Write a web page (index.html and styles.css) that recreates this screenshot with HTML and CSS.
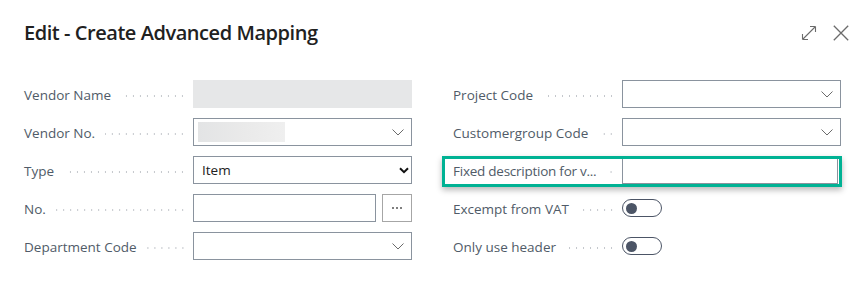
FILE: index.html
```html
<!DOCTYPE html>
<html lang="en">
<head>
<meta charset="utf-8">
<title>Edit - Create Advanced Mapping</title>
<link rel="stylesheet" href="styles.css">
</head>
<body>
<div class="dialog">
  <header class="header">
    <h1 class="title">Edit - Create Advanced Mapping</h1>
    <div class="actions">
      <button class="icon-btn" aria-label="Expand">
        <svg width="16" height="16" viewBox="0 0 16 16"><path d="M1.5 14.5 L14.5 1.5 M1.5 14.5 V9 M1.5 14.5 H7 M14.5 1.5 H9 M14.5 1.5 V7" fill="none" stroke="#6b6b6b" stroke-width="1.1"/></svg>
      </button>
      <button class="icon-btn" aria-label="Close">
        <svg width="16" height="16" viewBox="0 0 16 16"><path d="M0.8 0.8 L15.2 15.2 M15.2 0.8 L0.8 15.2" fill="none" stroke="#6b6b6b" stroke-width="1.3"/></svg>
      </button>
    </div>
  </header>

  <div class="form">
    <div class="col">
      <div class="row">
        <span class="label"><span class="label-text">Vendor Name</span><span class="leader"></span></span>
        <div class="field field-readonly"></div>
      </div>
      <div class="row">
        <span class="label"><span class="label-text">Vendor No.</span><span class="leader"></span></span>
        <div class="field field-lookup">
          <span class="blur-block"></span>
          <svg class="chevron" width="12" height="7" viewBox="0 0 12 7"><path d="M0.5 0.5 L6 6 L11.5 0.5" fill="none" stroke="#6b6b6b" stroke-width="1"/></svg>
        </div>
      </div>
      <div class="row">
        <span class="label"><span class="label-text">Type</span><span class="leader"></span></span>
        <div class="field field-select">
          <span class="value">Item</span>
          <svg class="chevron-bold" width="10" height="7" viewBox="0 0 10 7"><path d="M1 1.2 L5 5.2 L9 1.2" fill="none" stroke="#111" stroke-width="2"/></svg>
        </div>
      </div>
      <div class="row">
        <span class="label"><span class="label-text">No.</span><span class="leader"></span></span>
        <div class="field-pair">
          <div class="field"></div>
          <button class="assist-btn" aria-label="Select">
            <svg width="12" height="4" viewBox="0 0 12 4"><circle cx="2" cy="2" r="1" fill="#555"/><circle cx="6" cy="2" r="1" fill="#555"/><circle cx="10" cy="2" r="1" fill="#555"/></svg>
          </button>
        </div>
      </div>
      <div class="row">
        <span class="label"><span class="label-text">Department Code</span><span class="leader"></span></span>
        <div class="field field-lookup">
          <svg class="chevron" width="12" height="7" viewBox="0 0 12 7"><path d="M0.5 0.5 L6 6 L11.5 0.5" fill="none" stroke="#6b6b6b" stroke-width="1"/></svg>
        </div>
      </div>
    </div>

    <div class="col">
      <div class="row">
        <span class="label"><span class="label-text">Project Code</span><span class="leader"></span></span>
        <div class="field field-lookup">
          <svg class="chevron" width="12" height="7" viewBox="0 0 12 7"><path d="M0.5 0.5 L6 6 L11.5 0.5" fill="none" stroke="#6b6b6b" stroke-width="1"/></svg>
        </div>
      </div>
      <div class="row">
        <span class="label"><span class="label-text">Customergroup Code</span><span class="leader"></span></span>
        <div class="field field-lookup">
          <svg class="chevron" width="12" height="7" viewBox="0 0 12 7"><path d="M0.5 0.5 L6 6 L11.5 0.5" fill="none" stroke="#6b6b6b" stroke-width="1"/></svg>
        </div>
      </div>
      <div class="row row-highlight">
        <span class="label"><span class="label-text label-tight">Fixed description for v...</span><span class="leader"></span></span>
        <div class="field field-focus"></div>
      </div>
      <div class="row">
        <span class="label"><span class="label-text">Excempt from VAT</span><span class="leader"></span></span>
        <div class="toggle-cell"><span class="toggle"><span class="knob"></span></span></div>
      </div>
      <div class="row">
        <span class="label"><span class="label-text">Only use header</span><span class="leader"></span></span>
        <div class="toggle-cell"><span class="toggle"><span class="knob"></span></span></div>
      </div>
    </div>
  </div>
</div>
</body>
</html>
```

FILE: styles.css
```css
* { box-sizing: border-box; }

html, body {
  margin: 0;
  padding: 0;
  background: #ffffff;
}

body {
  font-family: "Open Sans", "Noto Sans", "Liberation Sans", sans-serif;
  color: #212121;
}

.dialog {
  width: 859px;
  height: 290px;
  padding: 20px 0 0 24px;
}

.header {
  display: flex;
  align-items: center;
  justify-content: space-between;
  height: 26px;
  padding-right: 10px;
}

.title {
  margin: 0;
  font-size: 20px;
  font-weight: 600;
  letter-spacing: -0.45px;
  color: #212121;
  line-height: 26px;
}

.actions {
  display: flex;
  align-items: center;
  gap: 16px;
}

.icon-btn {
  display: flex;
  padding: 0;
  border: 0;
  background: none;
  width: 16px;
  height: 16px;
}

.form {
  display: grid;
  grid-template-columns: 388px 388px;
  column-gap: 41px;
  margin-top: 34px;
}

.col {
  display: flex;
  flex-direction: column;
  gap: 10px;
}

.row {
  display: grid;
  grid-template-columns: 169px 1fr;
  height: 28px;
  align-items: center;
}

.label {
  display: flex;
  align-items: center;
  min-width: 0;
  padding-right: 7px;
  padding-top: 1px;
  font-size: 13.5px;
  color: #505b68;
}

.label-text {
  white-space: nowrap;
  flex: 0 0 auto;
}

.label-tight {
  letter-spacing: -0.25px;
}

.leader {
  flex: 1 0 4px;
  height: 2px;
  margin-left: 10px;
  margin-top: 2px;
  background-image: radial-gradient(circle, #c4c7cc 0.85px, transparent 1.05px);
  background-size: 7px 2px;
  background-position: right center;
  background-repeat: repeat-x;
}

.field {
  height: 28px;
  border: 1px solid #8a939e;
  background: #fff;
  display: flex;
  align-items: center;
  position: relative;
}

.field-readonly {
  border: 0;
  background: #e6e7e8;
}

.field-lookup {
  justify-content: space-between;
  padding: 0 7px 0 4px;
}

.blur-block {
  width: 87px;
  height: 20px;
  background: linear-gradient(90deg, #e3e4e5 0%, #eaeaea 55%, #efefef 100%);
}

.chevron {
  margin-left: auto;
}

.field-select {
  justify-content: space-between;
  padding: 0 2px 0 8px;
  font-size: 13.5px;
  color: #212121;
}

.field-pair {
  display: grid;
  grid-template-columns: 1fr 30px;
  gap: 6px;
}

.assist-btn {
  height: 28px;
  border: 1px solid #a6a6a6;
  background: #fff;
  padding: 0;
  display: flex;
  align-items: center;
  justify-content: center;
}

.row-highlight {
  position: relative;
}

.row-highlight::after {
  content: "";
  position: absolute;
  left: -11px;
  right: -1px;
  top: 0;
  bottom: -3px;
  border: 3px solid #00b294;
  box-shadow: 0 3px 6px rgba(0, 0, 0, 0.28);
  pointer-events: none;
}

.field-focus {
  height: 28px;
  margin-right: 3px;
  border-top-color: #d0d0d0;
}

.toggle-cell {
  display: flex;
  align-items: center;
}

.toggle {
  display: flex;
  align-items: center;
  width: 40px;
  height: 18px;
  border: 1.5px solid #4c5566;
  border-radius: 10px;
  padding-left: 3px;
}

.knob {
  width: 11px;
  height: 11px;
  border-radius: 50%;
  background: #4c5566;
}
```
